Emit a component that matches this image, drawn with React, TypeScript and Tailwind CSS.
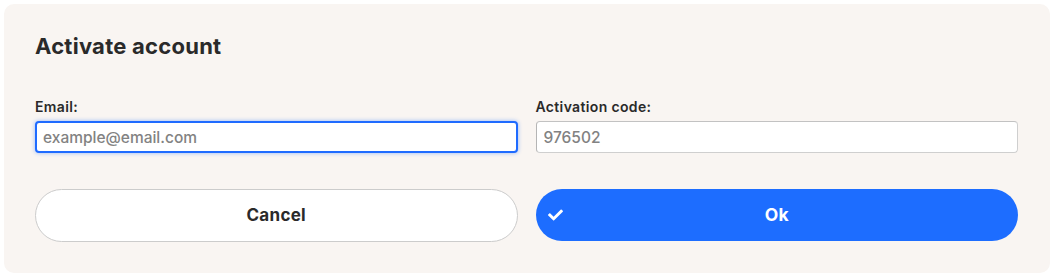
import { FaCheck } from 'react-icons/fa';

export default function App() {
  return (
    <div className="min-h-[277px] bg-white p-1 font-['Inter',sans-serif]">
      <div className="rounded-[10px] bg-[#f9f5f2] pl-[31px] pr-[32px] pt-[27px] pb-[31px]">
        <h1 className="text-[22px] leading-[30px] font-bold tracking-[0.25px] text-[#2a2a2a]">Activate account</h1>

        <div className="mt-[36px] grid grid-cols-2 gap-x-[18px]">
          <label className="block">
            <span className="block text-[14px] leading-[20px] font-semibold tracking-[0.35px] text-[#2a2a2a]">Email:</span>
            <input
              type="text"
              placeholder="example@email.com"
              className="mt-[4px] h-[32px] w-full rounded-[4px] border-2 border-[#1f6bff] bg-white px-[6px] text-[15.5px] font-medium text-[#333] placeholder:text-[#828282] shadow-[0_0_4px_rgba(31,107,255,0.45)] outline-none"
            />
          </label>
          <label className="block">
            <span className="block text-[14px] leading-[20px] font-semibold tracking-[0.35px] text-[#2a2a2a]">Activation code:</span>
            <input
              type="text"
              placeholder="976502"
              className="mt-[4px] h-[32px] w-full rounded-[4px] border border-[#cfcfcf] border-l-[#b5b5b5] border-t-[#c2c2c2] bg-white px-[7px] text-[15.5px] font-medium text-[#333] placeholder:text-[#828282] outline-none"
            />
          </label>

          <button className="mt-[36px] h-[53px] rounded-full border border-[#cccccc] bg-white text-[17px] font-bold tracking-[0.3px] text-[#2a2a2a]">
            Cancel
          </button>
          <button className="relative mt-[36px] flex h-[52px] items-center justify-center rounded-full bg-[#1d6dff] text-[17.5px] font-bold tracking-[0.3px] text-white">
            <FaCheck className="absolute left-[12px] top-1/2 -translate-y-1/2 text-[15px]" />
            Ok
          </button>
        </div>
      </div>
    </div>
  );
}
